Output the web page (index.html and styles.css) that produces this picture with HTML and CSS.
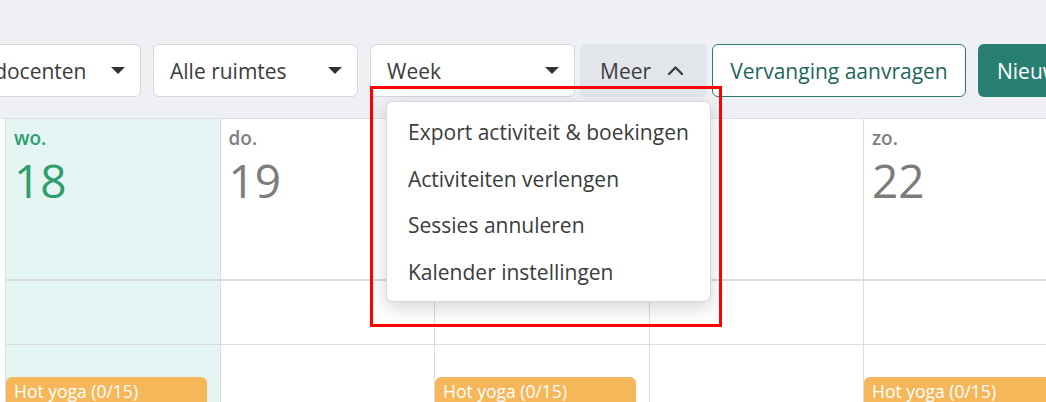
FILE: index.html
```html
<!DOCTYPE html>
<html lang="nl">
<head>
<meta charset="utf-8">
<title>Kalender</title>
<link rel="stylesheet" href="styles.css">
</head>
<body>
<div class="page">
  <div class="toolbar">
    <div class="select first"><span>Alle docenten</span><span class="caret"></span></div>
    <div class="select"><span>Alle ruimtes</span><span class="caret"></span></div>
    <div class="select"><span>Week</span><span class="caret"></span></div>
    <div class="more-wrap">
      <button class="btn more">Meer
        <svg class="chev" width="17" height="11" viewBox="0 0 17 11"><path d="M2 9 L8.5 2.5 L15 9" fill="none" stroke="#3d3d3d" stroke-width="2.4" stroke-linecap="round" stroke-linejoin="round"/></svg>
      </button>
      <div class="menu">
        <div class="item">Export activiteit &amp; boekingen</div>
        <div class="item">Activiteiten verlengen</div>
        <div class="item">Sessies annuleren</div>
        <div class="item">Kalender instellingen</div>
      </div>
      <div class="highlight"></div>
    </div>
    <button class="btn outline">Vervanging aanvragen</button>
    <button class="btn primary">Nieuwe activiteit</button>
  </div>
  <div class="grid">
    <div class="col stub"></div>
    <div class="col today"><div class="head"><div class="dow">wo.</div><div class="num">18</div></div><div class="row"></div><div class="row"><div class="event">Hot yoga (0/15)</div></div></div>
    <div class="col"><div class="head"><div class="dow">do.</div><div class="num">19</div></div><div class="row"></div><div class="row"></div></div>
    <div class="col"><div class="head"><div class="dow">vr.</div><div class="num">20</div></div><div class="row"></div><div class="row"><div class="event">Hot yoga (0/15)</div></div></div>
    <div class="col"><div class="head"><div class="dow">za.</div><div class="num">21</div></div><div class="row"></div><div class="row"></div></div>
    <div class="col"><div class="head"><div class="dow">zo.</div><div class="num">22</div></div><div class="row"></div><div class="row"><div class="event">Hot yoga (0/15)</div></div></div>
  </div>
</div>
</body>
</html>
```

FILE: styles.css
```css
* { box-sizing: border-box; }
html, body { margin: 0; padding: 0; }
body {
  width: 1046px;
  height: 402px;
  overflow: hidden;
  background: #ffffff;
  font-family: "Open Sans", "Liberation Sans", sans-serif;
  color: #3b3b3b;
}
.page { width: 1046px; height: 402px; overflow: hidden; }

.toolbar {
  display: flex;
  align-items: stretch;
  height: 119px;
  padding-top: 44px;
  padding-bottom: 21px;
  background: #eef0f4;
  border-bottom: 1px solid #dcdee2;
  white-space: nowrap;
}
.toolbar > * { flex-shrink: 0; }
.select {
  flex: 0 0 205px;
  height: 53px;
  margin-right: 12px;
  display: flex;
  align-items: center;
  justify-content: space-between;
  padding: 0 15px 0 16px;
  background: #fff;
  border: 1px solid #d3d6db;
  border-radius: 6px;
  font-size: 21px;
  color: #3b3b3b;
}
.select.first { margin-left: -64px; }
.caret {
  width: 0; height: 0;
  border-left: 7px solid transparent;
  border-right: 7px solid transparent;
  border-top: 7px solid #333;
}
.more-wrap { position: relative; display: flex; margin-left: -7px; margin-right: 5px; }
.btn {
  height: 53px;
  font-family: inherit;
  font-size: 21px;
  border-radius: 6px;
  display: flex;
  align-items: center;
  padding: 0 20px;
  flex-shrink: 0;
}
.more {
  width: 127px;
  background: #e2e5ea;
  border: 0;
  color: #3d3d3d;
  gap: 16px;
  padding-left: 20px;
}
.chev { display: block; }
.outline {
  width: 254px;
  background: #fff;
  border: 1px solid #2a7b6f;
  color: #1f665b;
  margin-right: 12px;
  justify-content: center;
}
.primary {
  background: #277e71;
  border: 0;
  color: #fff;
  padding-left: 19px;
}

.menu {
  position: absolute;
  left: -194px;
  top: 57px;
  width: 325px;
  height: 201px;
  background: #fff;
  border: 1px solid #d6d8dc;
  border-radius: 7px;
  box-shadow: 0 6px 18px rgba(0,0,0,0.17);
  padding: 9px 0 0 21px;
  z-index: 5;
}
.item {
  height: 46.5px;
  line-height: 42px;
  font-size: 21px;
  color: #3b3b3b;
}
.highlight {
  position: absolute;
  left: -210px;
  top: 42px;
  width: 352px;
  height: 241px;
  border: 3px solid #ff0000;
  z-index: 6;
}

.grid { display: flex; height: 283px; }
.col {
  flex: 0 0 214.5px;
  min-width: 0;
  border-left: 1px solid #dcdcdc;
}
.col.stub { flex: 0 0 5px; border-left: 0; }
.col.today { background: #e5f5f3; }
.head {
  height: 162px;
  border-bottom: 2px solid #dcdcdc;
  padding: 6px 0 0 8px;
}
.dow { font-size: 19px; font-weight: 600; color: #808080; line-height: 26px; }
.num { font-size: 46px; color: #7c7c7c; line-height: 56px; margin-top: 1px; }
.today .dow, .today .num { color: #2d9f6e; }
.row { height: 64px; border-bottom: 1px solid #dcdcdc; }
.row + .row { border-bottom: 0; padding-top: 32px; }
.event {
  width: 201px;
  height: 30px;
  background: #f6b75a;
  color: #fff;
  border-radius: 6px 6px 0 0;
  font-size: 17.5px;
  padding: 2px 0 0 8px;
  line-height: 24px;
}
```
